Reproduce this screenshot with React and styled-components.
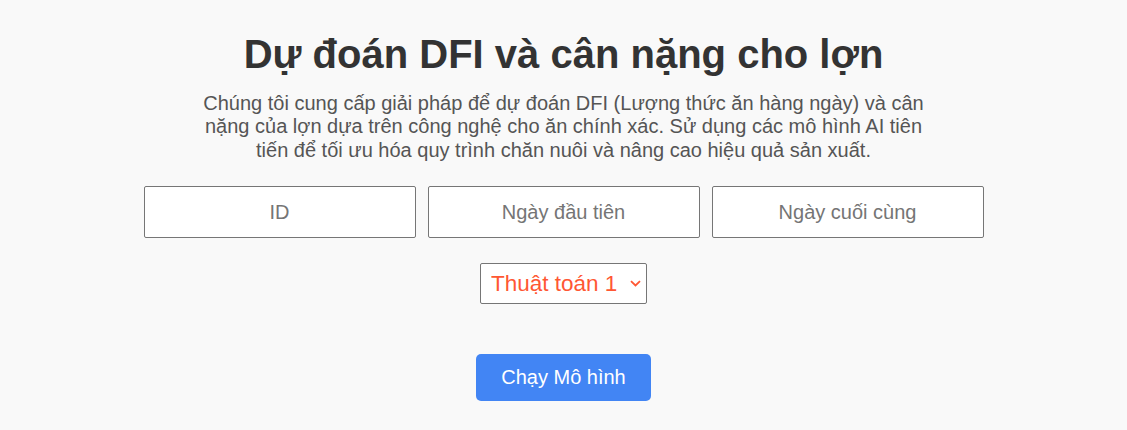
import React from "react";
import styled, { createGlobalStyle } from "styled-components";

const Global = createGlobalStyle`
  html, body { margin: 0; padding: 0; background: #f9f9f9; }
  body { font-family: "Liberation Sans", Arial, sans-serif; }
  * { box-sizing: border-box; }
`;

const Page = styled.main`
  display: flex;
  flex-direction: column;
  align-items: center;
  padding-top: 31px;
`;

const Title = styled.h1`
  margin: 0;
  font-size: 40px;
  line-height: 46px;
  font-weight: 700;
  color: #333;
`;

const Lead = styled.p`
  margin: 15px 0 0;
  max-width: 750px;
  font-size: 20px;
  line-height: 23.4px;
  color: #555;
  text-align: center;
`;

const Fields = styled.div`
  display: grid;
  grid-template-columns: repeat(3, 272px);
  gap: 12px;
  margin-top: 24px;
`;

const Field = styled.input`
  height: 52px;
  border: 1px solid #767676;
  border-radius: 2px;
  background: #fff;
  font-family: inherit;
  font-size: 20px;
  text-align: center;
  color: #333;
  &::placeholder { color: #757575; }
`;

const SelectWrap = styled.div`
  position: relative;
  margin-top: 25px;
  width: 167px;
  height: 41px;
`;

const Select = styled.select`
  appearance: none;
  width: 100%;
  height: 100%;
  border: 1px solid #767676;
  border-radius: 2px;
  background: #fff;
  color: #ff5733;
  font-family: inherit;
  font-size: 22.5px;
  padding: 0 0 0 10px;
`;

const Chevron = styled.svg`
  position: absolute;
  right: 6px;
  top: 17px;
  pointer-events: none;
`;

const RunButton = styled.button`
  margin-top: 50px;
  width: 175px;
  height: 47px;
  border: none;
  border-radius: 5px;
  background: #4285f4;
  color: #fff;
  font-family: inherit;
  font-size: 20px;
  cursor: pointer;
`;

export default function App() {
  return (
    <>
      <Global />
      <Page>
        <Title>Dự đoán DFI và cân nặng cho lợn</Title>
        <Lead>
          Chúng tôi cung cấp giải pháp để dự đoán DFI (Lượng thức ăn hàng ngày) và cân nặng
          của lợn dựa trên công nghệ cho ăn chính xác. Sử dụng các mô hình AI tiên tiến để tối
          ưu hóa quy trình chăn nuôi và nâng cao hiệu quả sản xuất.
        </Lead>
        <Fields>
          <Field placeholder="ID" />
          <Field placeholder="Ngày đầu tiên" />
          <Field placeholder="Ngày cuối cùng" />
        </Fields>
        <SelectWrap>
          <Select defaultValue="1">
            <option value="1">Thuật toán 1</option>
            <option value="2">Thuật toán 2</option>
          </Select>
          <Chevron width="11" height="7" viewBox="0 0 11 7">
            <path d="M1 1.2 L5.5 5.5 L10 1.2" fill="none" stroke="#ff5733" strokeWidth="1.8" />
          </Chevron>
        </SelectWrap>
        <RunButton>Chạy Mô hình</RunButton>
      </Page>
    </>
  );
}
